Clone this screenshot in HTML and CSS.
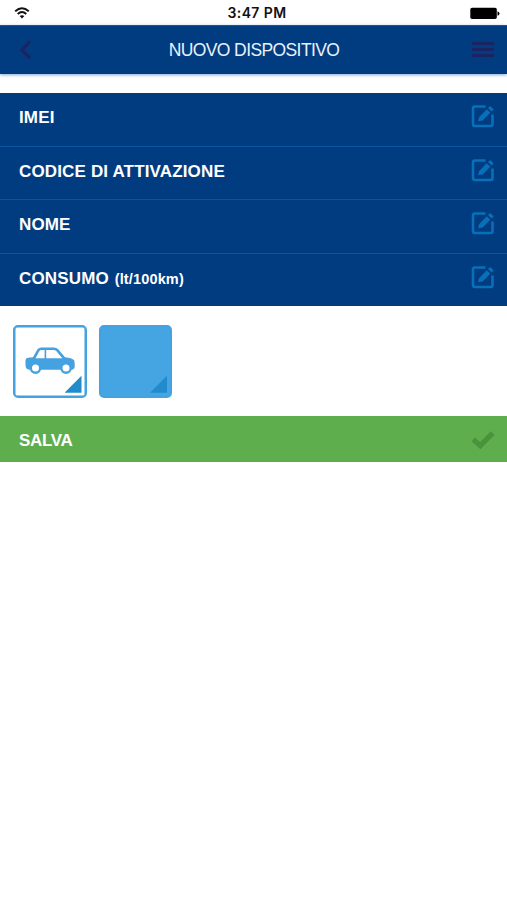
FILE: index.html
```html
<!DOCTYPE html>
<html lang="it">
<head>
    <meta charset="UTF-8">
    <meta name="viewport" content="width=device-width, initial-scale=1.0">
    <title>Nuovo dispositivo</title>
    <link rel="stylesheet" href="styles.css">
</head>
<body>
    <svg class="defs" width="0" height="0">
        <symbol id="edit" viewBox="0 0 24 24">
            <path d="M14.500 2.500H4Q2 2.500 2 4.500V20Q2 22 4 22H19.500Q21.500 22 21.500 20V10.500" fill="none" stroke="currentColor" stroke-width="2.600"/>
            <path d="M7 17.300L8.200 12.900L15.800 5.300L19.300 8.800L11.700 16.400Z M17 4.100L19.200 1.900L22.700 5.400L20.500 7.600Z" fill="currentColor"/>
        </symbol>
    </svg>

    <div class="status-bar">
        <svg class="wifi" width="16" height="12" viewBox="0 0 16 12">
            <path d="M1.200 4.300Q8 -1.700 14.800 4.300M3.700 7Q8 3.200 12.300 7" fill="none" stroke="#111" stroke-width="1.900"/>
            <path d="M8 11.600L5.600 9.100Q8 7.200 10.400 9.100Z" fill="#111"/>
        </svg>
        <span class="time">3:47 PM</span>
        <svg class="battery" width="31" height="13" viewBox="0 0 31 13">
            <rect x="1.300" y="0.700" width="26.500" height="11.300" rx="1.800" fill="#000"/>
            <path d="M28.500 4.300Q30.500 5 30.500 6.400Q30.500 8 28.500 8.700Z" fill="#000"/>
        </svg>
    </div>

    <div class="header">
        <svg class="back" width="13" height="20" viewBox="0 0 13 20">
            <path d="M11 1.500L3 10L11 18.200" fill="none" stroke="currentColor" stroke-width="3.200"/>
        </svg>
        <h1>NUOVO DISPOSITIVO</h1>
        <div class="menu"><span></span><span></span><span></span></div>
    </div>

    <div class="fields">
        <div class="field">
            <span>IMEI</span>
            <svg class="edit-icon"><use href="#edit"/></svg>
        </div>
        <div class="field">
            <span>CODICE DI ATTIVAZIONE</span>
            <svg class="edit-icon"><use href="#edit"/></svg>
        </div>
        <div class="field">
            <span>NOME</span>
            <svg class="edit-icon"><use href="#edit"/></svg>
        </div>
        <div class="field">
            <span>CONSUMO <small>(lt/100km)</small></span>
            <svg class="edit-icon"><use href="#edit"/></svg>
        </div>
    </div>

    <div class="pickers">
        <div class="picker">
            <svg width="50" height="28" viewBox="0 0 50 28">
                <path d="M0.500 13Q0.700 11 3 10.800L8 10.300L12 3Q13.300 0.500 16 0.500H29Q31.500 0.500 33 2L40 10.200Q47 11 49 13Q49.700 14 49.700 20Q49.500 22.500 46 22.700H4.500Q0.500 22.500 0.500 18Z" fill="#45a2e0"/>
                <path d="M10.500 11.300L14.300 4.200Q15 3 16.500 3H19.600V11.300ZM21.200 3H28.500Q30.300 3 31.300 4L37.300 11.300H21.200Z" fill="#fff"/>
                <circle cx="10.500" cy="21" r="4.700" fill="#fff" stroke="#45a2e0" stroke-width="2.400"/>
                <circle cx="41" cy="21" r="4.700" fill="#fff" stroke="#45a2e0" stroke-width="2.400"/>
            </svg>
        </div>
        <div class="picker picker-color"></div>
    </div>

    <div class="save">
        <span>SALVA</span>
        <svg width="24" height="20" viewBox="0 0 24 20">
            <path d="M2.300 9.300L9.300 15.700L21.700 3.200" fill="none" stroke="currentColor" stroke-width="5.200"/>
        </svg>
    </div>
</body>
</html>
```
FILE: styles.css
```css
* {
    box-sizing: border-box;
}
body {
    margin: 0;
    background: #fff;
    color: #fff;
    font-family: "Liberation Sans", Arial, sans-serif;
}
.defs {
    display: none;
}
svg {
    display: block;
}
.status-bar {
    display: grid;
    grid-template-columns: 1fr auto 1fr;
    align-items: center;
    height: 25px;
    padding: 1px 7px 0 14px;
    color: #111;
}
.time {
    font: 600 14px/24px Inter, sans-serif;
    letter-spacing: 0.4px;
}
.battery {
    justify-self: end;
}
.header {
    display: grid;
    grid-template-columns: 1fr auto 1fr;
    align-items: center;
    height: 49px;
    padding: 0 13px 0 19px;
    background: #023c80;
    border-top: 1px solid #1b5794;
    box-shadow: 0 1px 3px rgba(40, 110, 200, 0.6);
    color: #1b2462;
}
.header h1 {
    margin: 0;
    padding-right: 5px;
    color: #e9f1fb;
    font-size: 17.500px;
    font-weight: normal;
    letter-spacing: -0.600px;
    white-space: nowrap;
}
.menu {
    display: flex;
    flex-direction: column;
    gap: 3px;
    justify-self: end;
    width: 22px;
    padding-bottom: 2px;
}
.menu span {
    height: 3px;
    background: currentColor;
}
.fields {
    margin-top: 19px;
}
.field {
    display: flex;
    justify-content: space-between;
    height: 53.600px;
    padding: 11px 12px 0 19px;
    background: #023c80;
    border-bottom: 1px solid #0756a2;
    font-size: 17px;
    font-weight: bold;
    letter-spacing: 0.150px;
    line-height: 28px;
}
.field:last-child {
    height: 52px;
    border-bottom: none;
}
.field small {
    margin-left: 1px;
    font-size: 14.500px;
}
.edit-icon {
    width: 24px;
    height: 24px;
    color: #0870b8;
}
.pickers {
    display: flex;
    gap: 12px;
    padding: 19px 13px 18px;
}
.picker {
    position: relative;
    display: flex;
    align-items: center;
    justify-content: center;
    width: 73.500px;
    height: 73px;
    border: 2px solid #45a2e0;
    border-radius: 5px;
    box-shadow: inset 0 0 0 0.500px #45a2e0;
}
.picker-color {
    background: #45a5e3;
}
.picker::after {
    content: "";
    position: absolute;
    right: 3px;
    bottom: 3px;
    width: 17px;
    height: 17px;
    background: #228bcc;
    clip-path: polygon(100% 0, 100% 100%, 0 100%);
}
.save {
    display: flex;
    align-items: center;
    justify-content: space-between;
    height: 46px;
    padding: 2px 12px 0 19px;
    background: #5eae4e;
    font-size: 17px;
    font-weight: bold;
}
.save span {
    padding-top: 2px;
    letter-spacing: -0.300px;
}
.save svg {
    color: #48933b;
}
```
